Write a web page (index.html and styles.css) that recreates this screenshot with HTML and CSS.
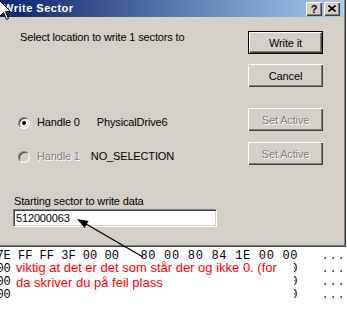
FILE: index.html
```html
<!DOCTYPE html>
<html>
  <head>
    <meta name="viewport" content="width=device-width, initial-scale=1.0" />
    <link rel="stylesheet" href="styles.css">
  </head>
  <body>
    <div class="dialog">
      <div class="titlebar">
        <span class="title">Write Sector</span>
        <div class="cap-buttons">
          <span class="cap-btn">?</span>
          <span class="cap-btn">
            <svg width="8" height="7" viewBox="0 0 8 7">
              <path d="M0.5 0.5L7.5 6.5M7.5 0.5L0.5 6.5" stroke="#000" stroke-width="1.6" fill="none" />
            </svg>
          </span>
        </div>
      </div>

      <div class="dialog-body">
        <div class="top-row">
          <p class="prompt">Select location to write 1 sectors to</p>
          <div class="btn-col">
            <button class="btn default">Write it</button>
            <button class="btn">Cancel</button>
          </div>
        </div>

        <div class="handle-row first">
          <div class="handle">
            <span class="radio checked"></span>
            <span class="handle-name">Handle 0</span>
            <span class="drive">PhysicalDrive6</span>
          </div>
          <button class="btn dim">Set Active</button>
        </div>

        <div class="handle-row second">
          <div class="handle">
            <span class="radio off"></span>
            <span class="handle-name dim">Handle 1</span>
            <span class="drive">NO_SELECTION</span>
          </div>
          <button class="btn dim">Set Active</button>
        </div>

        <div class="field-label">Starting sector to write data</div>
        <div class="field">512000063</div>
      </div>
    </div>

    <div class="hex">
      <div class="hx-line"><span class="hx">7E FF FF 3F 00 00   <span class="hx-hi">80 00 80 84 1E 00 00</span></span><span class="asc">...</span></div>
      <div class="hx-line"><span class="hx">00 00 00 00 00 00   <span class="hx-hi">00 00 00 00 00 00 00</span></span><span class="asc">...</span></div>
      <div class="hx-line"><span class="hx">00 00 00 00 00 00   <span class="hx-hi">00 00 00 00 00 00 00</span></span><span class="asc">...</span></div>
      <div class="hx-line"><span class="hx">00 00 00 00 00 00   <span class="hx-hi">00 00 00 00 00 00 00</span></span><span class="asc">...</span></div>
    </div>

    <!-- red note pasted over the hex dump -->
    <div class="note">viktig at det er det som står der og ikke 0. (for<br>da skriver du på feil plass</div>

    <svg class="pointer-arrow" width="347" height="329" viewBox="0 0 347 329">
      <path d="M86 224L143 257" stroke="#000" stroke-width="1.3" />
      <path d="M77 219L84.6 227.9L88.6 220.9Z" fill="#000" />
    </svg>

    <svg class="cursor" width="13" height="21" viewBox="0 0 13 21">
      <path d="M0.5 0.5V16.5L4.5 12.5L7.5 19.5L9.5 18.5L6.5 11.5H11.5Z" fill="#fff" stroke="#000" />
    </svg>
  </body>
</html>
```

FILE: styles.css
```css
* {
  box-sizing: border-box;
}

body {
  margin: 0;
  width: 347px;
  height: 329px;
  overflow: hidden;
  position: relative;
  background: #fff;
  font-family: "Liberation Sans", Arial, sans-serif;
  font-size: 11px;
  letter-spacing: -0.15px;
  color: #000;
}

.dialog {
  width: 346px;
  height: 247px;
  background: #d4d0c8;
  border-right: 1px solid #404040;
  border-bottom: 1px solid #404040;
  box-shadow: inset -1px -1px #808080;
  padding-right: 2px;
  display: flex;
  flex-direction: column;
}

.titlebar {
  height: 17px;
  margin-bottom: 1px;
  padding: 0 3px;
  background: linear-gradient(to right, #0a246a, #a6caf0);
  display: flex;
  align-items: center;
  justify-content: space-between;
}

.title {
  color: #fff;
  font-weight: bold;
  letter-spacing: 0.5px;
  line-height: 17px;
}

.cap-buttons {
  display: flex;
  gap: 2px;
}

.cap-btn {
  width: 16px;
  height: 14px;
  background: #d4d0c8;
  box-shadow: inset 1px 1px #fff, inset -1px -1px #404040, inset -2px -2px #808080;
  display: flex;
  align-items: center;
  justify-content: center;
  font-weight: bold;
  font-size: 11px;
  line-height: 14px;
  letter-spacing: 0;
}

.dialog-body {
  flex: 1;
  padding: 13px 20px 0 13px;
}

.top-row {
  display: flex;
  justify-content: space-between;
  align-items: flex-start;
}

.prompt {
  margin: 0 0 0 7px;
  line-height: 13px;
}

.btn-col {
  display: flex;
  flex-direction: column;
  gap: 10px;
}

.btn {
  width: 75px;
  height: 23px;
  padding: 0;
  border: none;
  background: #d4d0c8;
  font: inherit;
  letter-spacing: inherit;
  color: #000;
  box-shadow: inset 1px 1px #fff, inset -1px -1px #404040, inset -2px -2px #808080;
}

.btn.default {
  border: 1px solid #000;
}

.dim {
  color: #808080;
  text-shadow: 1px 1px #fff;
}

.handle-row {
  display: flex;
  align-items: flex-start;
  height: 23px;
}

.handle-row.first {
  margin-top: 21px;
}

.handle-row.second {
  margin-top: 11px;
}

.handle-row .btn {
  margin-left: auto;
}

.handle {
  display: flex;
  align-items: center;
  margin-top: 8px;
  line-height: 13px;
}

.radio {
  width: 12px;
  height: 12px;
  margin-left: 5px;
  border-radius: 50%;
  background: #fff;
  border: 1px solid;
  border-color: #808080 #fff #fff #808080;
  box-shadow: inset 1px 1px #404040, inset -1px -1px #d4d0c8;
  display: flex;
  align-items: center;
  justify-content: center;
}

.radio.checked::after {
  content: "";
  width: 4px;
  height: 4px;
  border-radius: 50%;
  background: #000;
}

.radio.off {
  background: #d4d0c8;
}

.handle-name {
  margin-left: 7px;
}

.first .drive {
  margin-left: 17px;
}

.second .drive {
  margin-left: 11px;
}

.field-label {
  margin: 30px 0 0 1px;
  line-height: 13px;
}

.field {
  width: 204px;
  height: 18px;
  margin-top: 1px;
  padding-left: 2px;
  background: #fff;
  border: 1px solid;
  border-color: #808080 #fff #fff #808080;
  box-shadow: inset 1px 1px #404040, inset -1px -1px #d4d0c8;
  line-height: 16px;
}

.hex {
  padding-top: 3px;
  font-family: "Liberation Mono", monospace;
  font-size: 12px;
  line-height: 13px;
  letter-spacing: 0;
}

.hx-line {
  display: flex;
  white-space: pre;
}

.hx {
  flex: none;
  width: 325px;
  margin-left: -3.6px;
}

.hx-hi {
  letter-spacing: 0.69px;
}

.asc {
  letter-spacing: 0.8px;
  color: #333;
}

.note {
  position: absolute;
  left: 14px;
  top: 260px;
  width: 280px;
  height: 43px;
  padding-left: 2px;
  background: #fff;
  color: #f00;
  font-size: 13px;
  line-height: 15px;
  letter-spacing: 0;
  white-space: nowrap;
}

.pointer-arrow {
  position: absolute;
  left: 0;
  top: 0;
  pointer-events: none;
}

.cursor {
  position: absolute;
  left: -1px;
  top: 0;
}
```
